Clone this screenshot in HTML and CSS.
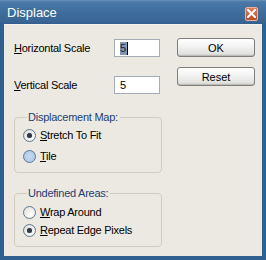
FILE: index.html
```html
<!DOCTYPE html>
<html>
<head>
<meta charset="utf-8">
<link rel="stylesheet" href="styles.css">
</head>
<body>
<div class="window">
  <div class="titlebar">
    <span class="title">Displace</span>
    <span class="close">
      <svg width="9" height="9" viewBox="0 0 9 9"><path d="M1 1 L8 8 M8 1 L1 8" stroke="#fff" stroke-width="2" stroke-linecap="square"/></svg>
    </span>
  </div>
  <div class="body">
    <div class="left">
      <div class="field">
        <span class="label"><u>H</u>orizontal Scale</span>
        <div class="input"><span class="sel">5</span><span class="caret"></span></div>
      </div>
      <div class="field second">
        <span class="label"><u>V</u>ertical Scale</span>
        <div class="input">5</div>
      </div>
      <fieldset class="group g1">
        <legend>Displacement Map:</legend>
        <div class="radio checked"><span class="circle"></span><span><u>S</u>tretch To Fit</span></div>
        <div class="radio hover"><span class="circle"></span><span><u>T</u>ile</span></div>
      </fieldset>
      <fieldset class="group g2">
        <legend>Undefined Areas:</legend>
        <div class="radio"><span class="circle"></span><span><u>W</u>rap Around</span></div>
        <div class="radio checked"><span class="circle"></span><span><u>R</u>epeat Edge Pixels</span></div>
      </fieldset>
    </div>
    <div class="right">
      <div class="button">OK</div>
      <div class="button">Reset</div>
    </div>
  </div>
</div>
</body>
</html>
```

FILE: styles.css
```css
* { box-sizing: border-box; }
html, body { margin: 0; padding: 0; }
body {
  width: 266px;
  height: 260px;
  overflow: hidden;
  font-family: "Liberation Sans", Arial, sans-serif;
  font-size: 11px;
  color: #000;
}
.window {
  width: 266px;
  height: 260px;
  display: flex;
  flex-direction: column;
  background: #30608f;
}
.titlebar {
  height: 24px;
  display: flex;
  align-items: center;
  justify-content: space-between;
  padding: 0 8px 0 7px;
  background: linear-gradient(to bottom, #6a92bc 0px, #4a78a7 2px, #3f6d9c 12px, #386593 22px, #305d8b 24px);
}
.title {
  color: #fff;
  font-size: 13px;
  line-height: 14px;
  margin-top: 1px;
}
.close {
  width: 13px;
  height: 14px;
  margin-top: 3px;
  border: 1px solid #e8b49c;
  border-radius: 2px;
  background: linear-gradient(to bottom, #dc805f, #c75f3f 60%, #b5502f);
  display: flex;
  align-items: center;
  justify-content: center;
}
.close svg { display: block; }
.body {
  flex: 1;
  margin: 0 4px 4px 4px;
  background: #ece9e2;
  display: flex;
  padding: 13px 0 0 10px;
  gap: 15px;
  border-top: 1px solid #f4f2ee;
}
.left {
  width: 148px;
  display: flex;
  flex-direction: column;
  padding-top: 1px;
}
.field {
  display: flex;
  align-items: center;
  justify-content: space-between;
  height: 18px;
  padding-right: 2px;
}
.field.second { margin-top: 19px; }
.label {
  letter-spacing: -0.25px;
}
.input {
  width: 46px;
  height: 18px;
  border: 1px solid #a3acb7;
  background: #fff;
  padding: 2px 0 0 5px;
  line-height: 13px;
  display: flex;
  align-items: flex-start;
}
.sel {
  background: #8397b5;
  color: #102040;
  padding: 0 1px 0 0;
}
.caret {
  width: 1px;
  height: 13px;
  background: #000;
}
.group {
  margin: 0;
  border: 1px solid #d0cdc0;
  border-radius: 4px;
  min-width: 0;
}
.group legend {
  padding: 0 2px 0 1px;
  margin-left: 4px;
  line-height: 13px;
  color: #223e72;
  letter-spacing: -0.25px;
}
.g1 { margin-top: 17px; padding: 5px 0 9px 8px; }
.g2 { margin-top: 14px; padding: 6px 0 9px 8px; }
.radio {
  display: flex;
  align-items: center;
  height: 13px;
  line-height: 13px;
  letter-spacing: -0.25px;
}
.g1 .radio + .radio { margin-top: 8px; }
.g2 .radio + .radio { margin-top: 5px; }
.circle {
  width: 13px;
  height: 13px;
  border-radius: 50%;
  border: 1px solid #5c7896;
  background: radial-gradient(circle at 65% 70%, #ffffff 0%, #eceae4 60%, #d8d6ce 100%);
  margin-right: 4px;
  flex: none;
  position: relative;
}
.radio.hover .circle {
  background: radial-gradient(circle at 50% 50%, #c4daf0 0%, #b2cbe6 70%, #98b6d8 100%);
}
.radio.checked .circle::after {
  content: "";
  position: absolute;
  left: 3px;
  top: 3px;
  width: 5px;
  height: 5px;
  border-radius: 50%;
  background: #2e3a48;
  box-shadow: 0 0 1px #8090a8;
}
.right {
  width: 78px;
  display: flex;
  flex-direction: column;
  gap: 10px;
}
.button {
  height: 19px;
  border: 1px solid #7f7f80;
  border-radius: 3px;
  background: linear-gradient(to bottom, #ffffff 0%, #f4f4f4 40%, #e2e2e0 85%, #c9c9c6 100%);
  display: flex;
  align-items: center;
  justify-content: center;
  box-shadow: inset 0 -1px 0 #bdbdb8;
}
```
